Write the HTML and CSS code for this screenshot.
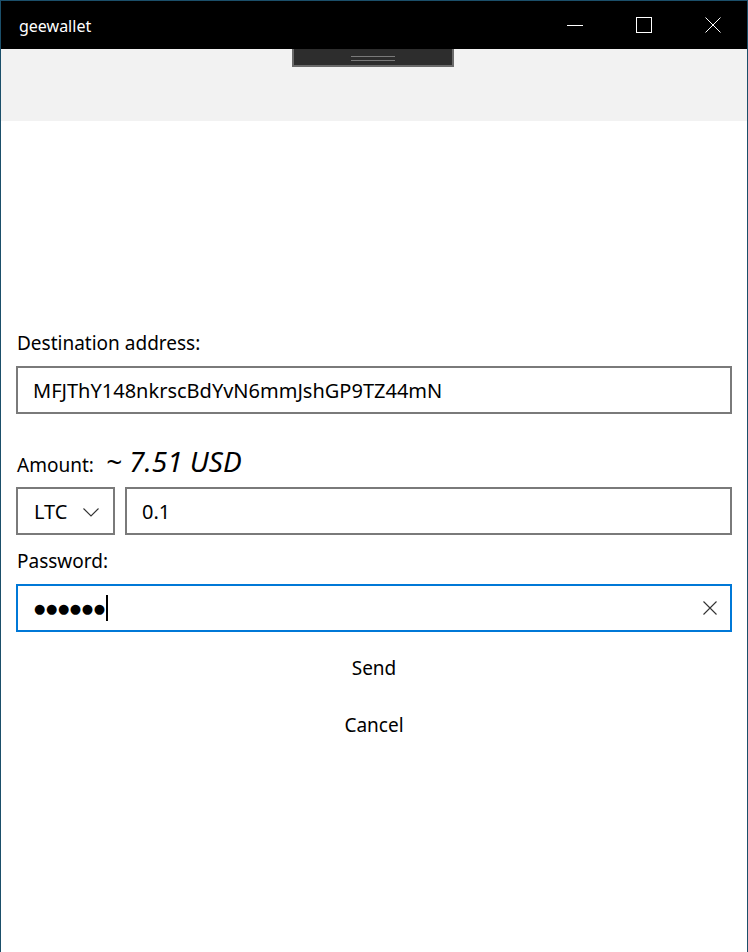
FILE: index.html
```html
<!DOCTYPE html>
<html>
<head>
<meta charset="utf-8">
<link rel="stylesheet" href="styles.css">
</head>
<body>
<div class="window">
  <div class="titlebar">
    <div class="title">geewallet</div>
    <div class="controls">
      <div class="ctl"><svg width="16" height="16" viewBox="0 0 16 16"><line x1="0" y1="8.5" x2="16" y2="8.5" stroke="#fff" stroke-width="1"/></svg></div>
      <div class="ctl"><svg width="16" height="16" viewBox="0 0 16 16"><rect x="0.5" y="0.5" width="15" height="15" fill="none" stroke="#fff" stroke-width="1"/></svg></div>
      <div class="ctl"><svg width="16" height="16" viewBox="0 0 16 16"><path d="M0.5 0.5 L15.5 15.5 M15.5 0.5 L0.5 15.5" stroke="#fff" stroke-width="1"/></svg></div>
    </div>
  </div>
  <div class="toolbar">
    <div class="handle"><span class="grip"></span></div>
  </div>
  <div class="content">
    <div class="label">Destination address:</div>
    <div class="field">MFJThY148nkrscBdYvN6mmJshGP9TZ44mN</div>
    <div class="amount-row">
      <span class="label">Amount:</span>
      <span class="usd">~ 7.51 USD</span>
    </div>
    <div class="amount-inputs">
      <div class="combo">
        <span>LTC</span>
        <svg class="chev" width="16" height="9" viewBox="0 0 16 9"><path d="M0.5 0.5 L8 8 L15.5 0.5" fill="none" stroke="#333" stroke-width="1.1"/></svg>
      </div>
      <div class="field grow">0.1</div>
    </div>
    <div class="label pw-label">Password:</div>
    <div class="field focus">
      <span class="dots">●●●●●●</span><span class="caret"></span>
      <svg class="clear" width="14" height="14" viewBox="0 0 14 14"><path d="M0.5 0.5 L13.5 13.5 M13.5 0.5 L0.5 13.5" stroke="#333" stroke-width="1.1"/></svg>
    </div>
    <div class="btn send">Send</div>
    <div class="btn cancel">Cancel</div>
  </div>
</div>
</body>
</html>
```

FILE: styles.css
```css
html, body {
  margin: 0;
  padding: 0;
  background: #fff;
}
.window {
  width: 748px;
  height: 952px;
  box-sizing: border-box;
  border: 1px solid #1b4f6a;
  border-bottom: none;
  display: flex;
  flex-direction: column;
  font-family: "Noto Sans", "Open Sans", sans-serif;
  color: #000;
}
.titlebar {
  height: 48px;
  background: #000;
  display: flex;
  align-items: center;
  justify-content: space-between;
}
.title {
  color: #fff;
  font-size: 16px;
  padding-left: 18px;
  padding-top: 1px;
}
.controls {
  display: flex;
  height: 100%;
}
.ctl {
  width: 69px;
  display: flex;
  align-items: center;
  justify-content: center;
}
.ctl svg { display: block; }
.toolbar {
  height: 72px;
  background: #f2f2f2;
  display: flex;
  justify-content: center;
}
.handle {
  width: 158px;
  height: 16px;
  margin-left: -3px;
  background: #2d2d2d;
  border: 2px solid #6a6a6a;
  border-top: none;
  display: flex;
  align-items: center;
  justify-content: center;
}
.grip {
  width: 44px;
  height: 3px;
  border-top: 1px solid #7a7a7a;
  border-bottom: 1px solid #7a7a7a;
  margin-top: 2px;
}
.content {
  flex: 1;
  padding: 208px 15px 0 15px;
  display: flex;
  flex-direction: column;
}
.label {
  font-size: 19px;
  line-height: 28px;
  padding-left: 1px;
}
.field {
  height: 48px;
  box-sizing: border-box;
  border: 2px solid #7a7a7a;
  display: flex;
  align-items: center;
  padding-left: 15px;
  font-size: 20px;
  margin-top: 9px;
}
.amount-row {
  margin-top: 33px;
  display: flex;
  align-items: baseline;
  gap: 12px;
}
.usd {
  font-size: 28px;
  font-style: italic;
  line-height: 28px;
}
.amount-inputs {
  display: flex;
  gap: 10px;
  margin-top: 8px;
}
.amount-inputs .field { margin-top: 0; }
.combo {
  width: 99px;
  height: 48px;
  box-sizing: border-box;
  border: 2px solid #7a7a7a;
  display: flex;
  align-items: center;
  padding-left: 16px;
  font-size: 20px;
  gap: 16px;
}
.chev { display: block; margin-top: 2px; }
.grow { flex: 1; }
.pw-label { margin-top: 12px; }
.field.focus {
  border-color: #0078d7;
  margin-top: 9px;
  padding-left: 16px;
  padding-right: 13px;
}
.dots {
  font-family: "DejaVu Sans", sans-serif;
  font-size: 13px;
  letter-spacing: 0.6px;
}
.caret {
  width: 2px;
  height: 26px;
  background: #000;
  margin-left: 0;
}
.clear {
  margin-left: auto;
  display: block;
}
.btn {
  text-align: center;
  font-size: 19px;
  line-height: 28px;
}
.send { margin-top: 22px; }
.cancel { margin-top: 29px; }
```
